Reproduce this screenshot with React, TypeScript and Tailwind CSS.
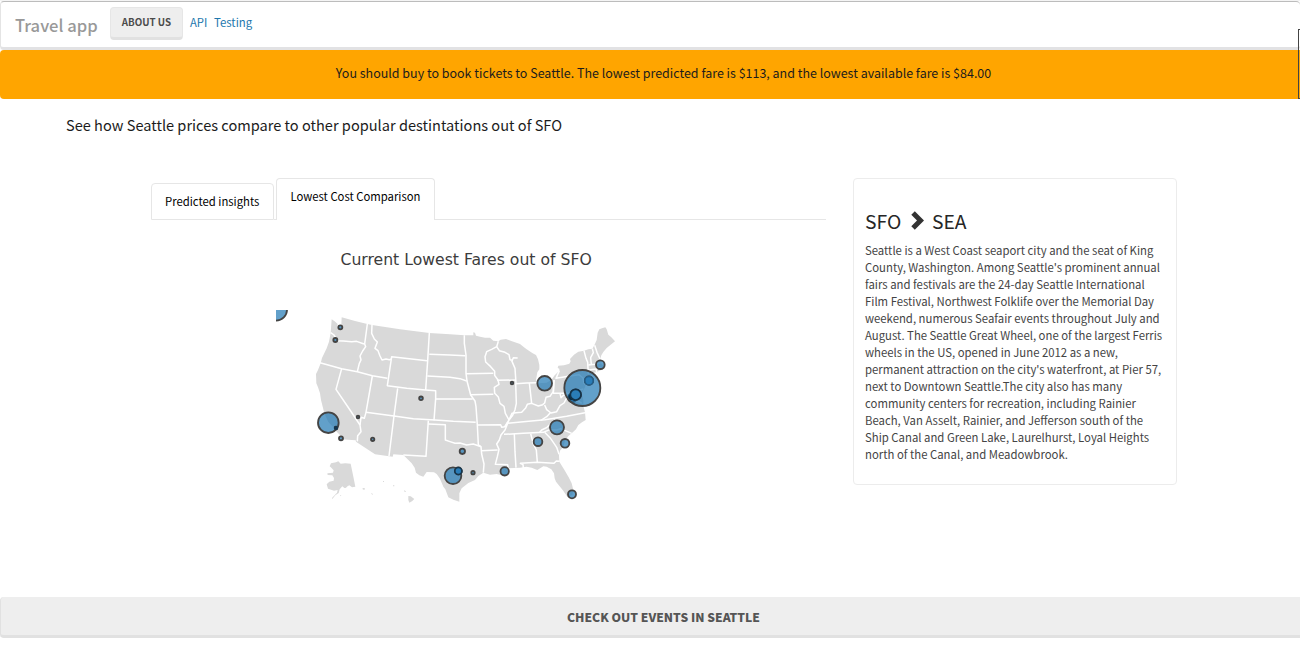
type Fare = { x: number; y: number; r: number };

const COUNTRY =
  '215,58 224,64 233,72 232,82 238,84 244,76 245,52 285,63 322,72 336,75 420,88 508,99 570,103 613,106 640,106 640,97 645,98 648,107 660,110 675,113 690,113 700,122 715,124 722,119 738,117 756,124 780,132 792,142 800,148 818,160 828,165 834,178 838,195 838,208 832,217 828,240 834,250 860,248 874,240 884,226 898,212 898,206 893,204 895,197 912,196 928,191 932,184 930,177 942,164 955,155 972,152 985,148 997,146 1003,136 1010,120 1013,98 1018,88 1026,85 1036,82 1040,88 1045,104 1054,112 1065,124 1052,134 1040,144 1030,156 1024,166 1020,180 1024,192 1036,204 1026,209 1010,216 985,223 998,221 985,232 980,250 972,268 965,280 970,300 970,318 975,337 977,360 966,367 955,375 948,388 935,400 925,408 915,422 910,440 900,452 897,465 898,485 912,508 926,532 935,550 940,570 937,585 922,590 908,570 888,545 884,535 882,520 874,508 860,500 850,499 832,510 815,503 800,500 780,503 745,505 739,508 745,522 735,528 710,522 690,524 670,518 655,528 645,540 625,549 605,565 598,580 598,605 580,599 565,592 556,568 550,560 540,536 530,522 522,517 500,516 490,530 478,526 468,518 464,503 455,490 430,465 400,463 398,470 345,463 288,425 287,421 243,418 240,405 230,395 222,384 205,366 193,340 183,300 180,280 174,262 169,250 168,222 174,210 182,190 186,174 200,145 207,125 212,98';

const ALASKA =
  '209,499 213,490 228,487 235,484 242,491 256,490 272,491 279,525 286,560 276,562 268,556 260,560 253,564 247,559 239,568 236,579 226,586 217,597 216,594 231,578 233,570 222,572 204,566 200,553 208,545 221,542 222,534 217,526 203,525 202,520 219,518 221,511 214,503';

const BORDERS = [
  '212,98 222,105 232,122 250,123 275,125 290,124 312,132',
  '322,72 314,132 317,140 308,153 300,168 303,180 298,190 292,215',
  '180,188 245,206 292,215 337,227 382,235',
  '245,206 228,268 270,330 300,375 303,395 293,407 292,424',
  '337,228 318,337 313,355 303,352 300,375',
  '336,75 335,100 343,117 352,126 345,145 354,152 360,168 366,180 378,177 388,179 395,177',
  '501,182 395,170 382,257 440,265 497,270 527,272 527,295 522,361',
  '508,99 503,182 500,225 497,270',
  '413,265 402,348 387,468',
  '318,337 402,348 460,356 525,360 580,364 647,367',
  '505,362 498,469 430,465',
  '505,372 556,374 556,420 570,425 585,430 600,429 620,435 640,432 663,440',
  '508,163 570,165 616,167',
  '502,228 570,232 600,236 620,243',
  '527,297 570,297 638,297',
  '613,106 613,130 618,165 618,220 621,243 632,285 645,303 648,320 652,375 655,435 663,440 665,462 672,492 670,518',
  '618,221 700,220',
  '631,284 700,283',
  '715,124 710,140 695,148 680,155 675,170 677,186 692,200 704,214 704,226 714,240 717,253 703,262 704,280 715,291 720,310 732,319 736,340 747,360',
  '710,140 718,152 735,157 747,164 750,179 757,181 760,173 773,174',
  '755,182 765,205 768,250',
  '711,241 768,240',
  '767,251 800,249 830,248',
  '767,250 769,310 765,329 758,346 747,360',
  '808,249 811,275 815,310',
  '747,360 756,340 768,338 785,337 797,324 802,313 815,310 835,318 848,314 854,309 858,292 870,289 880,274 882,240',
  '882,240 880,280 926,280 970,267',
  '898,212 888,235 925,229 957,224 969,234 972,250 982,257',
  '900,281 903,293 912,284 930,289 940,301 960,306 965,310',
  '854,315 860,329 873,339 890,335 900,317 912,309 920,294 930,290',
  '871,338 860,350 843,361',
  '740,370 790,365 855,359 920,349 975,338',
  '732,403 790,400 850,397 869,389 890,390 902,386 935,400',
  '839,397 845,390 861,382 872,371 885,359',
  '653,375 722,374 725,382 734,380 747,360 735,390 723,405 718,420 710,432 717,448 712,470 706,493 743,494 745,507',
  '663,452 713,450',
  '763,402 765,455 768,503',
  '812,401 820,432 829,450 832,487',
  '790,504 789,494 781,490 832,487 882,490 889,483 899,484',
  '854,397 870,413 882,430 890,442 897,463',
  '972,152 978,175 983,187 985,223',
  '985,195 1005,193 1022,188',
  '986,210 1008,207 1022,202',
  '997,146 1000,158 992,173 994,194',
  '1004,136 1011,157 1020,177',
  '1008,207 1010,216',
];

const FARES: Fare[] = [
  { x: 48, y: 29, r: 33 },
  { x: 241, y: 82, r: 6 },
  { x: 226, y: 120, r: 6 },
  { x: 483, y: 295, r: 5.5 },
  { x: 854, y: 250, r: 22 },
  { x: 937, y: 293, r: 13 },
  { x: 967, y: 264, r: 54 },
  { x: 947, y: 284, r: 16 },
  { x: 987, y: 242, r: 12.5 },
  { x: 1021, y: 194, r: 13 },
  { x: 756, y: 249, r: 4 },
  { x: 205, y: 368, r: 31 },
  { x: 228, y: 384, r: 4 },
  { x: 243, y: 415, r: 6 },
  { x: 294, y: 351, r: 4 },
  { x: 338, y: 418, r: 5 },
  { x: 891, y: 382, r: 21 },
  { x: 834, y: 425, r: 13 },
  { x: 915, y: 430, r: 13 },
  { x: 607, y: 454, r: 8 },
  { x: 579, y: 527, r: 25 },
  { x: 595, y: 513, r: 10.5 },
  { x: 639, y: 518, r: 5 },
  { x: 734, y: 514, r: 12.5 },
  { x: 936, y: 583, r: 12 },
];

function FareMap() {
  return (
    <svg viewBox="48 30 1140 630" className="ml-[125px] mt-[38px] block h-[210px] w-[380px]">
      <g fill="#d9d9d9">
        <polygon points={COUNTRY} />
        <polygon points={ALASKA} />
        <polygon points="445,588 452,589 463,597 457,603 448,608 445,600" />
        <path d="M433 571l5 3-2 2-4-2zM399 556l4 0 0 3-4 0zM369 543l3 0 0 3-3 0zM308 564l7 1-2 5-5-2zM335 579l4 4-2 1-3-3zM252 561l8-4 2 3-7 5zM240 586l4-1-2 4z" />
      </g>
      <g fill="none" stroke="#fff" strokeWidth="4.5" strokeLinejoin="round">
        {BORDERS.map((points) => (
          <polyline key={points} points={points} />
        ))}
      </g>
      <g fill="#1f77b4" stroke="#444" strokeWidth="5.5">
        {FARES.map((f) => (
          <circle key={`${f.x}-${f.y}`} cx={f.x} cy={f.y} r={f.r} fillOpacity="0.7" />
        ))}
      </g>
      <path d="M926 284a12 12 0 0 0 12 17l8 2-2-4a16 16 0 0 1-13-15z" fill="#062c44" />
      <g fill="#2a7db8" strokeWidth="5">
        <circle cx="947" cy="284" r="16" stroke="#12324a" />
        <circle cx="987" cy="242" r="12.5" stroke="#235f8b" />
        <circle cx="595" cy="513" r="10.5" stroke="#17364c" />
        <circle cx="228" cy="384" r="4" fill="#0d3556" stroke="#17364c" />
      </g>
    </svg>
  );
}

function Navbar() {
  return (
    <nav className="flex h-[49px] items-start rounded-[4px] border-t border-b-[3px] border-l border-t-[#bcbcbc] border-b-[#e2e2e4] border-l-[#e4e4e4] pl-[14px]">
      <span className="mt-[11px] w-[95px] text-[16.6px] leading-[24px] font-medium whitespace-nowrap text-[#999]">
        Travel app
      </span>
      <button className="mt-[5px] h-[33px] w-[73px] rounded-[4px] border border-b-[3px] border-[#e6e6e6] border-b-[#e1e1e1] bg-[#eee] text-[9.75px] leading-[27px] font-bold whitespace-nowrap text-[#4b4b4b]">
        ABOUT US
      </button>
      <a className="mt-[11px] ml-[7px] w-[24px] text-[11.3px] leading-[19px] text-[#1c77ae]">API</a>
      <a className="mt-[11px] text-[11.4px] leading-[19px] text-[#1c77ae]">Testing</a>
    </nav>
  );
}

const DESCRIPTION = [
  'Seattle is a West Coast seaport city and the seat of King',
  "County, Washington. Among Seattle's prominent annual",
  'fairs and festivals are the 24-day Seattle International',
  'Film Festival, Northwest Folklife over the Memorial Day',
  'weekend, numerous Seafair events throughout July and',
  'August. The Seattle Great Wheel, one of the largest Ferris',
  'wheels in the US, opened in June 2012 as a new,',
  "permanent attraction on the city's waterfront, at Pier 57,",
  'next to Downtown Seattle.The city also has many',
  'community centers for recreation, including Rainier',
  'Beach, Van Asselt, Rainier, and Jefferson south of the',
  'Ship Canal and Green Lake, Laurelhurst, Loyal Heights',
  'north of the Canal, and Meadowbrook.',
];

export default function App() {
  return (
    <div className="relative flex h-[653px] w-[1300px] flex-col overflow-hidden bg-white font-['Noto_Sans_CJK_SC',sans-serif]">
      <div className="h-px bg-[#f4f4f4]" />
      <Navbar />
      <div className="h-[49px] rounded-l-[4px] bg-[#ffa500] pl-[27px] text-center text-[12.48px] leading-[47px] text-[#1c1c1c]">
        You should buy to book tickets to Seattle. The lowest predicted fare is $113, and the lowest available fare is $84.00
      </div>
      <h2 className="mt-[13px] ml-[66px] h-[26px] text-[14.58px] leading-[26px] text-[#1c1c1c]">
        See how Seattle prices compare to other popular destintations out of SFO
      </h2>

      <main className="mt-[40px] flex h-[419px] items-start pl-[151px]">
        <section className="w-[675px]">
          <div className="flex h-[42px] items-end text-[11.3px] text-black">
            <div className="h-[37px] w-[123px] rounded-t-[4px] border border-[#e6e6e6] pl-[13px] leading-[35px] whitespace-nowrap">
              Predicted insights
            </div>
            <div className="h-px w-[2px] bg-[#e6e6e6]" />
            <div className="h-[42px] w-[159px] rounded-t-[4px] border border-b-0 border-[#e6e6e6] pl-[13.5px] leading-[35px] whitespace-nowrap">
              Lowest Cost Comparison
            </div>
            <div className="h-px flex-1 bg-[#e6e6e6]" />
          </div>
          <h3 className="mt-[28px] ml-[189.5px] h-[24px] font-['DejaVu_Sans',sans-serif] text-[15.65px] leading-[24px] whitespace-nowrap text-[#3c3c3c]">
            Current Lowest Fares out of SFO
          </h3>
          <FareMap />
        </section>

        <aside className="ml-[27px] h-[307px] w-[324px] rounded-[4px] border border-[#ececec] pt-[28px] pl-[11px]">
          <h3 className="flex h-[28px] items-center text-[19.3px] leading-[28px] text-[#262626]">
            <span className="w-[46px]">SFO</span>
            <svg viewBox="0 0 13 19" className="mr-[8px] -mt-[2px] h-[19px] w-[13px]" fill="#333">
              <path d="M3.8.3 13 9.5 3.8 18.7.3 15.2 6 9.5.3 3.8z" />
            </svg>
            <span>SEA</span>
          </h3>
          <p className="mt-[7px] text-[11.35px] leading-[17px] text-[#444]">
            {DESCRIPTION.map((line) => (
              <span key={line} className="block whitespace-nowrap">
                {line}
              </span>
            ))}
          </p>
        </aside>
      </main>

      <button className="h-[41px] rounded-l-[4px] border-b-[3px] border-l border-b-[#e1e1e1] border-l-[#e1e1e1] bg-[#eee] pt-px pl-[26px] text-center text-[12.11px] leading-[37px] font-black text-[#555]">
        CHECK OUT EVENTS IN SEATTLE
      </button>

      <div className="absolute top-[29px] right-0 h-[70px] w-[2px] border border-r-0 border-[#444]" />
    </div>
  );
}
